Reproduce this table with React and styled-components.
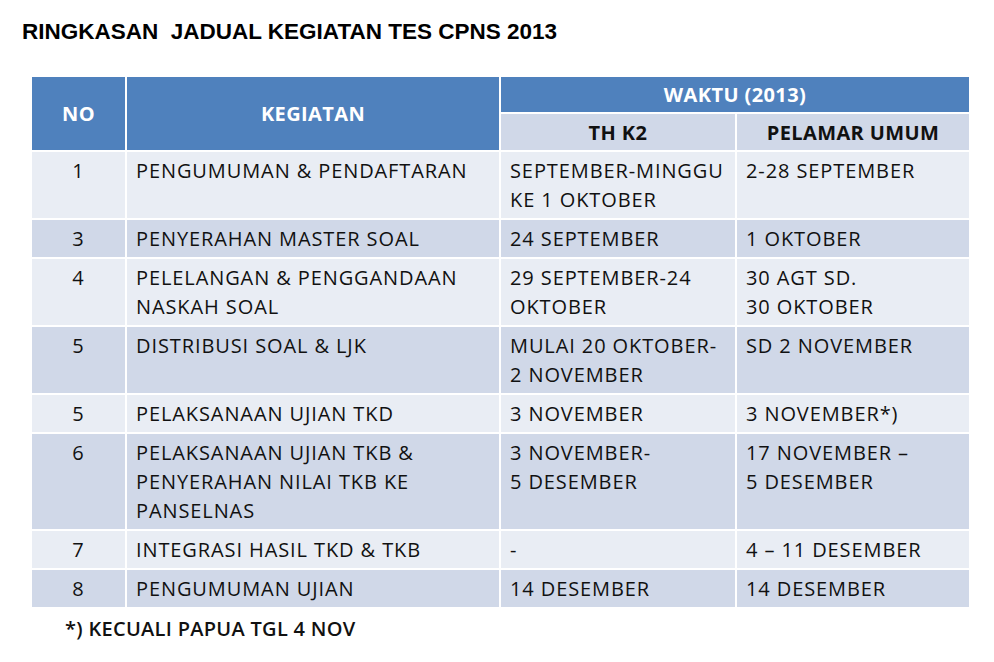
import React from 'react';
import styled, { createGlobalStyle } from 'styled-components';

const Global = createGlobalStyle`
  html, body { margin: 0; padding: 0; background: #fff; }
  body { width: 994px; height: 662px; overflow: hidden; }
`;

const Page = styled.div`
  padding: 17px 0 0 22px;
  font-family: "Open Sans", "Liberation Sans", sans-serif;
  color: #111;
`;

const Title = styled.h1`
  margin: 0;
  font-family: "Liberation Sans", Arial, sans-serif;
  font-weight: 700;
  font-size: 22.5px;
  line-height: 30px;
  white-space: pre;
  color: #000;
`;

const Table = styled.table`
  margin: 28px 0 0 8px;
  border-collapse: collapse;
  table-layout: fixed;
  width: 939px;
  font-size: 20px;
`;

const HeadCell = styled.th`
  background: ${p => (p.$sub ? '#d0d8e8' : '#4f81bd')};
  color: ${p => (p.$sub ? '#111' : '#fff')};
  font-weight: 700;
  font-size: 20px;
  border: 2px solid #fff;
  height: ${p => (p.$sub ? '36px' : '35px')};
  padding: 0;
  text-align: center;
  vertical-align: middle;
  letter-spacing: 0.4px;
`;

const Cell = styled.td`
  background: ${p => (p.$alt ? '#d0d8e8' : '#e9edf4')};
  border: 2px solid #fff;
  padding: 4px 6px 4px ${p => (p.$center ? '6px' : '9px')};
  text-align: ${p => (p.$center ? 'center' : 'left')};
  vertical-align: top;
  line-height: 29px;
  letter-spacing: 0.9px;
  white-space: nowrap;
`;

const Note = styled.p`
  margin: 5px 0 0 43px;
  font-size: 20px;
  line-height: 29px;
  font-weight: 600;
  letter-spacing: 0.3px;
  color: #111;
`;

const rows = [
  ['1', ['PENGUMUMAN & PENDAFTARAN'], ['SEPTEMBER-MINGGU', 'KE 1 OKTOBER'], ['2-28 SEPTEMBER']],
  ['3', ['PENYERAHAN MASTER SOAL'], ['24 SEPTEMBER'], ['1 OKTOBER']],
  ['4', ['PELELANGAN & PENGGANDAAN', 'NASKAH SOAL'], ['29 SEPTEMBER-24', 'OKTOBER'], ['30 AGT SD.', '30 OKTOBER']],
  ['5', ['DISTRIBUSI SOAL & LJK'], ['MULAI 20 OKTOBER-', '2 NOVEMBER'], ['SD 2 NOVEMBER']],
  ['5', ['PELAKSANAAN UJIAN TKD'], ['3 NOVEMBER'], ['3 NOVEMBER*)']],
  ['6', ['PELAKSANAAN UJIAN TKB &', 'PENYERAHAN NILAI TKB KE', 'PANSELNAS'], ['3 NOVEMBER-', '5 DESEMBER'], ['17 NOVEMBER \u2013', '5 DESEMBER']],
  ['7', ['INTEGRASI HASIL TKD & TKB'], ['-'], ['4 \u2013 11 DESEMBER']],
  ['8', ['PENGUMUMAN UJIAN'], ['14 DESEMBER'], ['14 DESEMBER']],
];

function Lines({ items }) {
  return items.map((t, i) => (
    <React.Fragment key={i}>
      {i > 0 && <br />}
      {t}
    </React.Fragment>
  ));
}

export default function App() {
  return (
    <Page>
      <Global />
      <Title>RINGKASAN  JADUAL KEGIATAN TES CPNS 2013</Title>
      <Table>
        <colgroup>
          <col style={{ width: 95 }} />
          <col style={{ width: 374 }} />
          <col style={{ width: 236 }} />
          <col style={{ width: 234 }} />
        </colgroup>
        <thead>
          <tr>
            <HeadCell rowSpan={2}>NO</HeadCell>
            <HeadCell rowSpan={2}>KEGIATAN</HeadCell>
            <HeadCell colSpan={2}>WAKTU (2013)</HeadCell>
          </tr>
          <tr>
            <HeadCell $sub>TH K2</HeadCell>
            <HeadCell $sub>PELAMAR UMUM</HeadCell>
          </tr>
        </thead>
        <tbody>
          {rows.map((r, i) => (
            <tr key={i}>
              <Cell $alt={i % 2 === 1} $center>{r[0]}</Cell>
              <Cell $alt={i % 2 === 1}><Lines items={r[1]} /></Cell>
              <Cell $alt={i % 2 === 1}><Lines items={r[2]} /></Cell>
              <Cell $alt={i % 2 === 1}><Lines items={r[3]} /></Cell>
            </tr>
          ))}
        </tbody>
      </Table>
      <Note>*) KECUALI PAPUA TGL 4 NOV</Note>
    </Page>
  );
}
